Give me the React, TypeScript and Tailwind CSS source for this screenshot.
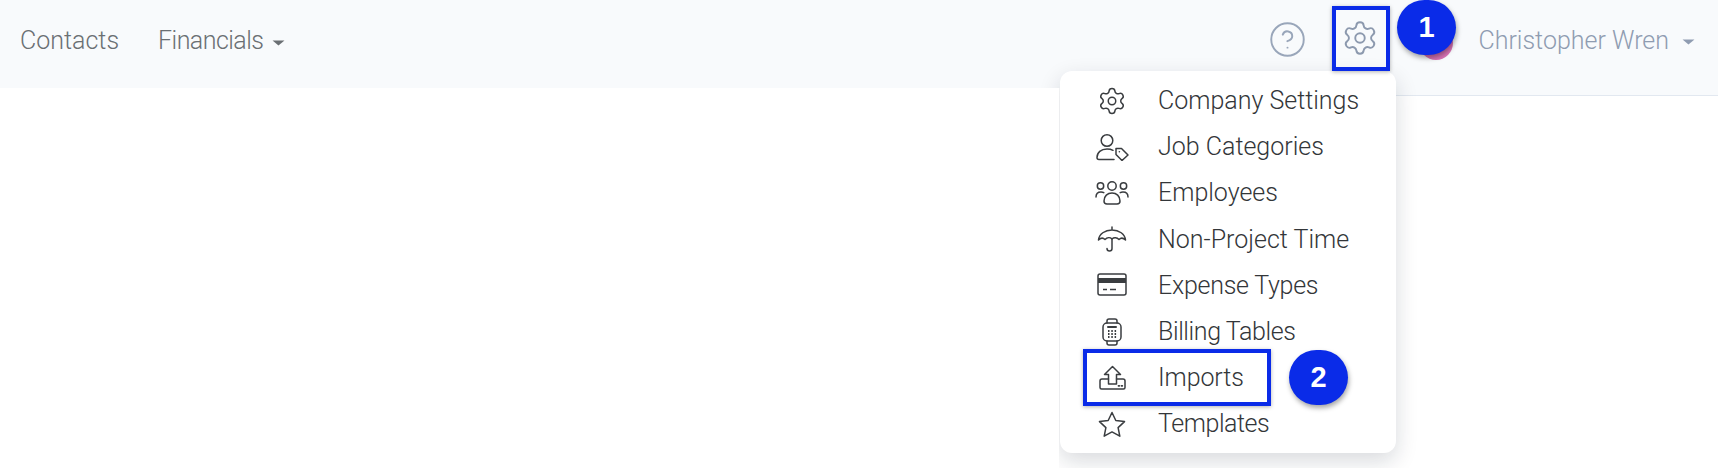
import React from 'react'
import { CircleHelp, Settings } from 'lucide-react'

const Caret = ({ color }: { color: string }) => (
    <svg width="13" height="6" viewBox="0 0 12 6" preserveAspectRatio="none" className={color}>
        <path d="M0.5 0.5h11L6 5.5z" fill="currentColor" />
    </svg>
)

const stroke = { fill: 'none', stroke: 'currentColor', strokeWidth: 1.5, strokeLinecap: 'round', strokeLinejoin: 'round' } as const

const icons: Record<string, React.ReactNode> = {
    gear: <Settings size={30} strokeWidth={1.2} />,
    tag: (
        <svg width="34" height="28" viewBox="0 0 34 28" {...stroke}>
            <circle cx="12" cy="7.500" r="5.800" />
            <path d="M19 26.500H4a2 2 0 0 1-2-2c0-5 4-8.500 10-8.500 2.500 0 4.500.5 6 1.300" />
            <path d="M21 15.500l5.500 0 6.500 6.500-6 5.500-6-6z" />
            <path d="M24.300 18.800h.2" strokeWidth="1.400" />
        </svg>
    ),
    people: (
        <svg width="34" height="24" viewBox="0 0 34 24" {...stroke}>
            <circle cx="5.500" cy="5" r="3.200" />
            <circle cx="17" cy="5" r="4.200" />
            <circle cx="28.500" cy="5" r="3.200" />
            <path d="M1 16c0-3 2-5 5-5 1 0 2 .2 2.800.7M33 16c0-3-2-5-5-5-1 0-2 .2-2.800.7" />
            <path d="M9 20c0-5 3.500-8 8-8s8 3 8 8a3 3 0 0 1-3 3H12a3 3 0 0 1-3-3z" />
        </svg>
    ),
    umbrella: (
        <svg width="30" height="26" viewBox="0 0 30 26" {...stroke}>
            <path d="M15 1v3M1.500 14C2 8 8 4 15 4s13 4 13.500 10c-2-2-4.500-2.500-6.500-.5-2-2-5-2.500-7-.5-2-2-5-1.500-7 .5-2-2-4.500-1.500-6.500.5z" />
            <path d="M15 13v9.500a2.500 2.500 0 0 1-5 0" />
        </svg>
    ),
    card: (
        <svg width="30" height="24" viewBox="0 0 30 24">
            <rect x="1" y="1" width="28" height="21" rx="2" fill="none" stroke="currentColor" strokeWidth="1.500" />
            <rect x="1" y="5" width="28" height="5" fill="currentColor" />
            <path d="M6 16.500h4M13 16.500h6" stroke="currentColor" strokeWidth="1.500" />
        </svg>
    ),
    calc: (
        <svg width="22" height="28" viewBox="0 0 22 28" {...stroke}>
            <rect x="2" y="5" width="18" height="18" rx="4" />
            <path d="M6 5V3a2 2 0 0 1 2-2h6a2 2 0 0 1 2 2v2M6 23v2a2 2 0 0 0 2 2h6a2 2 0 0 0 2-2v-2" />
            <path d="M7 9h8" strokeWidth="2" />
            <path d="M7 13h1.500M10.300 13h1.500M13.600 13h1.500M7 16h1.500M10.300 16h1.500M13.600 16h1.500M7 19h1.500M10.300 19h1.500M13.600 19h1.500" strokeWidth="1.800" strokeLinecap="butt" />
        </svg>
    ),
    upload: (
        <svg width="28" height="26" viewBox="0 0 28 26" {...stroke}>
            <path d="M14.500 1.500l8 8h-4V19h-8V9.500h-4z" />
            <path d="M10.500 14H4a2 2 0 0 0-2 2v6.500A1.500 1.500 0 0 0 3.500 24h22a1.500 1.500 0 0 0 1.500-1.500V16a2 2 0 0 0-2-2h-6.500" />
            <path d="M20.500 20.800h.8M23.500 20.800h.8" strokeWidth="1.800" />
        </svg>
    ),
    star: (
        <svg width="28" height="26" viewBox="0 0 28 26" {...stroke}>
            <path d="M14 1.500l3.800 8 8.700 1.100-6.400 6 1.700 8.600L14 20.900l-7.800 4.300 1.700-8.600-6.400-6 8.700-1.100z" />
        </svg>
    ),
}

const items = [
    { label: 'Company Settings', icon: 'gear', tracking: '' },
    { label: 'Job Categories', icon: 'tag', tracking: '' },
    { label: 'Employees', icon: 'people', tracking: '' },
    { label: 'Non-Project Time', icon: 'umbrella', tracking: '' },
    { label: 'Expense Types', icon: 'card', tracking: 'tracking-[-0.25px]' },
    { label: 'Billing Tables', icon: 'calc', tracking: 'tracking-[-0.4px]' },
    { label: 'Imports', icon: 'upload', tracking: 'tracking-[-0.1px]' },
    { label: 'Templates', icon: 'star', tracking: 'tracking-[-0.45px]' },
]

const Badge = ({ n, className }: { n: number; className: string }) => (
    <div
        className={`absolute flex h-[55px] w-[59px] items-center justify-center rounded-full bg-[#0a2be8] font-['Liberation_Sans',sans-serif] text-[29px] font-bold text-white shadow-[1px_3px_5px_rgba(0,0,0,0.35)] ${className}`}
    >
        {n}
    </div>
)

export default function App() {
    return (
        <div className="relative h-[468px] w-[1718px] overflow-hidden bg-white font-['Roboto','Liberation_Sans',sans-serif]">
            <header className="flex h-[88px] items-center justify-between bg-[#f8fafc] pl-[20px] pr-[23px]">
                <nav className="flex items-center gap-[39px] pb-[6px] text-[25px] font-light text-[#6a6f73]">
                    <span>Contacts</span>
                    <span className="flex items-center gap-[9px] tracking-[-0.55px]">
                        Financials
                        <Caret color="mt-[3px] text-[#6a6f73]" />
                    </span>
                </nav>
                <div className="flex items-center pb-[6px]">
                    <CircleHelp size={39} strokeWidth={1.2} className="mb-[4px] mr-[34px] text-[#99a6ba]" />
                    <Settings size={38} strokeWidth={1.2} className="mb-[6px] mr-[99px] text-[#8c99ae]" />
                    <span className="flex items-center gap-[13px] text-[25px] font-light text-[#8f9cb1]">
                        Christopher Wren
                        <Caret color="mt-[2px] text-[#8f9cb1]" />
                    </span>
                </div>
            </header>
            <div className="absolute right-0 top-[88px] h-[8px] w-[360px] border-b border-[#e2e8f0] bg-[#f8fafc]" />

            {/* avatar behind the number badge */}
            <div className="absolute left-[1419px] top-[26px] h-[34px] w-[34px] rounded-full bg-[#d973b5]" />

            {/* shadow is cut off at the content panel's left edge below the header */}
            <div className="absolute left-[1060px] top-[71px] w-[336px] rounded-[12px] bg-white pb-[6px] pt-[7px] shadow-[0_8px_22px_rgba(15,23,42,0.16)] [clip-path:polygon(-60px_-71px,700px_-71px,700px_500px,-1px_500px,-1px_17px,-60px_17px)]">
                {items.map(item => (
                    <div key={item.label} className="flex h-[46.1px] items-center text-[25px] font-light text-[#333639]">
                        <span className="flex w-[98px] justify-center pl-[6px] text-[#3a3d40]">{icons[item.icon]}</span>
                        <span className={item.tracking}>{item.label}</span>
                    </div>
                ))}
            </div>

            {/* annotations */}
            <div className="absolute left-[1332px] top-[6px] h-[65px] w-[58px] border-[4px] border-[#0a2be8] shadow-[0_1px_4px_rgba(0,0,0,0.3)]" />
            <div className="absolute left-[1083px] top-[349px] h-[57px] w-[188px] border-[4px] border-[#0a2be8] shadow-[0_1px_4px_rgba(0,0,0,0.3)]" />
            <Badge n={1} className="left-[1397px] top-0" />
            <Badge n={2} className="left-[1289px] top-[350px]" />
        </div>
    )
}
